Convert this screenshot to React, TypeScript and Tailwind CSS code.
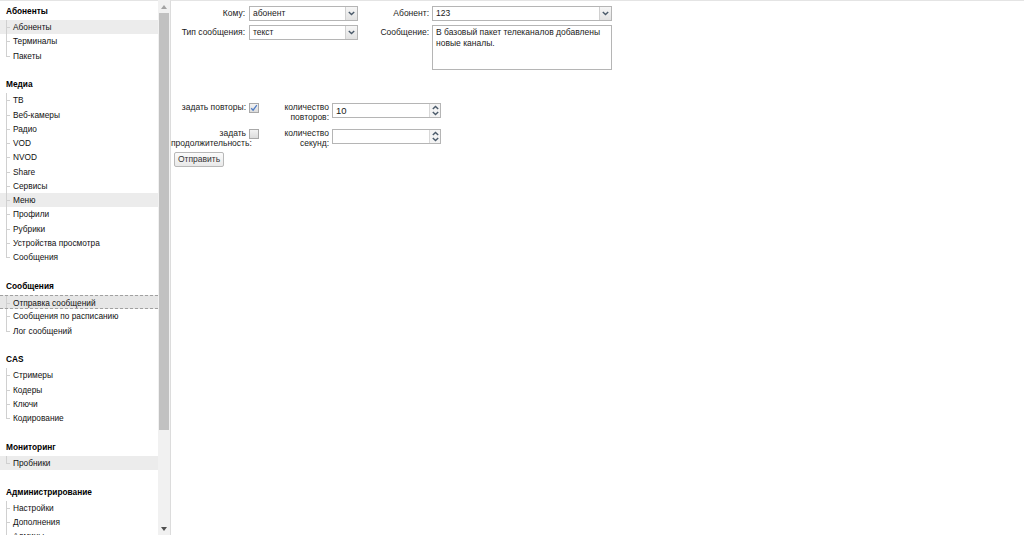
import React from "react";

type Section = { title: string; items: string[] };

const sections: Section[] = [
  { title: "Абоненты", items: ["Абоненты", "Терминалы", "Пакеты"] },
  {
    title: "Медиа",
    items: [
      "ТВ",
      "Веб-камеры",
      "Радио",
      "VOD",
      "NVOD",
      "Share",
      "Сервисы",
      "Меню",
      "Профили",
      "Рубрики",
      "Устройства просмотра",
      "Сообщения",
    ],
  },
  { title: "Сообщения", items: ["Отправка сообщений", "Сообщения по расписанию", "Лог сообщений"] },
  { title: "CAS", items: ["Стримеры", "Кодеры", "Ключи", "Кодирование"] },
  { title: "Мониторинг", items: ["Пробники"] },
  { title: "Администрирование", items: ["Настройки", "Дополнения", "Админы"] },
];

const hovered = ["Абоненты-0", "Медиа-7", "Мониторинг-0"];
const active = "Сообщения-0";

function Chevron({ up = false }: { up?: boolean }) {
  return (
    <svg width="7" height="5" viewBox="0 0 7 5" className={up ? "rotate-180" : ""}>
      <path d="M0.8 1 L3.5 3.6 L6.2 1" fill="none" stroke="#4a5a6a" strokeWidth="1.4" />
    </svg>
  );
}

function Select({ value, width }: { value: string; width: string }) {
  return (
    <div className={`${width} h-[15px] flex border border-[#b5b5b5] bg-white`}>
      <div className="flex-1 pl-[3px] leading-[13px]">{value}</div>
      <div className="w-[12px] flex items-center justify-center border-l border-[#d0d0d0] bg-gradient-to-b from-[#f6f6f6] to-[#e2e2e2]">
        <Chevron />
      </div>
    </div>
  );
}

function Spin({ value }: { value: string }) {
  return (
    <div className="w-[109px] h-[15px] flex border border-[#b5b5b5] bg-white">
      <div className="flex-1 pl-[3px] leading-[14px] text-[9.5px]">{value}</div>
      <div className="w-[11px] flex flex-col items-center justify-center gap-[1px] border-l border-[#d8d8d8] bg-[#f3f3f3]">
        <Chevron up />
        <Chevron />
      </div>
    </div>
  );
}

function Checkbox({ checked }: { checked?: boolean }) {
  return (
    <div className="w-[10px] h-[10px] border border-[#a8a8a8] bg-gradient-to-b from-[#f2f2f2] to-[#dcdcdc] flex items-center justify-center">
      {checked && (
        <svg width="8" height="8" viewBox="0 0 8 8">
          <path d="M1.2 4.3 L3.1 6.2 L6.8 1.2" fill="none" stroke="#4d7bc4" strokeWidth="1.3" />
        </svg>
      )}
    </div>
  );
}

export default function App() {
  return (
    <div
      className="w-[1024px] h-[535px] flex overflow-hidden bg-white text-[8.5px] text-[#1a1a1a]"
      style={{ fontFamily: '"Liberation Sans", Arial, sans-serif' }}
    >
      {/* sidebar */}
      <div className="w-[158px] h-full overflow-hidden border-t border-[#e4e4e4] pt-[1px] text-[8.3px] text-[#111]">
        {sections.map((s) => (
          <div key={s.title} className="mb-[12.5px]">
            <div className="h-[18px] pl-[6px] pt-[3px] font-bold text-black">{s.title}</div>
            <div className="relative">
              {s.items.map((it, i) => {
                const key = `${s.title}-${i}`;
                const isActive = key === active;
                const isHover = hovered.includes(key);
                const last = i === s.items.length - 1;
                return (
                  <div
                    key={key}
                    className={`relative h-[14.27px] pl-[13px] leading-[15px] ${
                      isActive
                        ? "bg-[#e6e6e6] border-y border-dashed border-[#a0a0a0] leading-[13px]"
                        : isHover
                        ? "bg-[#ececec]"
                        : ""
                    }`}
                  >
                    <span
                      className={`absolute left-[6px] top-0 w-0 border-l border-[#d0d0d0] ${
                        last ? "h-[7px]" : "h-full"
                      }`}
                    />
                    <span className="absolute left-[6px] top-[7px] w-[4px] border-t border-[#d0d0d0]" />
                    {it}
                  </div>
                );
              })}
            </div>
          </div>
        ))}
      </div>

      {/* scrollbar */}
      <div className="w-[12px] h-full flex flex-col bg-[#f1f1f1]">
        <div className="h-[13px] flex items-center justify-center">
          <svg width="6" height="4" viewBox="0 0 6 4">
            <path d="M0 4 L3 0 L6 4 Z" fill="#a3a3a3" />
          </svg>
        </div>
        <div className="h-[417px] mx-[1px] bg-[#c1c1c1]" />
        <div className="flex-1" />
        <div className="h-[13px] flex items-center justify-center">
          <svg width="6" height="4" viewBox="0 0 6 4">
            <path d="M0 0 L6 0 L3 4 Z" fill="#505050" />
          </svg>
        </div>
      </div>

      {/* main */}
      <div className="flex-1 h-full border-l border-[#dcdcdc] border-t border-t-[#e4e4e4] pt-[5px]">
        <div className="flex">
          <div className="flex flex-col gap-[4px]">
            <div className="flex items-start">
              <div className="w-[74px] text-right leading-[15px]">Кому:</div>
              <div className="ml-[4px]">
                <Select value="абонент" width="w-[109px]" />
              </div>
            </div>
            <div className="flex items-start">
              <div className="w-[74px] text-right leading-[15px]">Тип сообщения:</div>
              <div className="ml-[4px]">
                <Select value="текст" width="w-[109px]" />
              </div>
            </div>
          </div>
          <div className="flex flex-col gap-[4px]">
            <div className="flex items-start">
              <div className="w-[71px] text-right leading-[15px]">Абонент:</div>
              <div className="ml-[3px]">
                <Select value="123" width="w-[180px]" />
              </div>
            </div>
            <div className="flex items-start">
              <div className="w-[71px] text-right leading-[15px]">Сообщение:</div>
              <div className="ml-[3px] w-[180px] h-[45px] border border-[#b5b5b5] px-[3px] pt-[1px] leading-[11px]">
                В базовый пакет телеканалов добавлены новые каналы.
              </div>
            </div>
          </div>
        </div>

        <div className="mt-[31px] flex flex-col gap-[4px]">
          <div className="flex items-start h-[22px]">
            <div className="w-[75px] text-right leading-[10px] pt-[1px]">задать повторы:</div>
            <div className="ml-[3px] mt-[2px]">
              <Checkbox checked />
            </div>
            <div className="w-[70px] text-right leading-[10px] pt-[1px]">
              количество
              <br />
              повторов:
            </div>
            <div className="ml-[3px] mt-[2px]">
              <Spin value="10" />
            </div>
          </div>
          <div className="flex items-start">
            <div className="w-[75px] text-right leading-[9.5px] pt-[2px]">
              задать
              <br />
              продолжительность:
            </div>
            <div className="ml-[3px] mt-[2px]">
              <Checkbox />
            </div>
            <div className="w-[70px] text-right leading-[9.5px] pt-[2px]">
              количество
              <br />
              секунд:
            </div>
            <div className="ml-[3px] mt-[2px]">
              <Spin value="" />
            </div>
          </div>
        </div>

        <div className="mt-[4px] ml-[3px]">
          <button className="h-[15px] px-[3px] border border-[#b8b8b8] rounded-[2px] bg-gradient-to-b from-[#fbfbfb] to-[#e9e9e9] text-[8.5px] leading-[13px] text-[#333]">
            Отправить
          </button>
        </div>
      </div>
    </div>
  );
}
